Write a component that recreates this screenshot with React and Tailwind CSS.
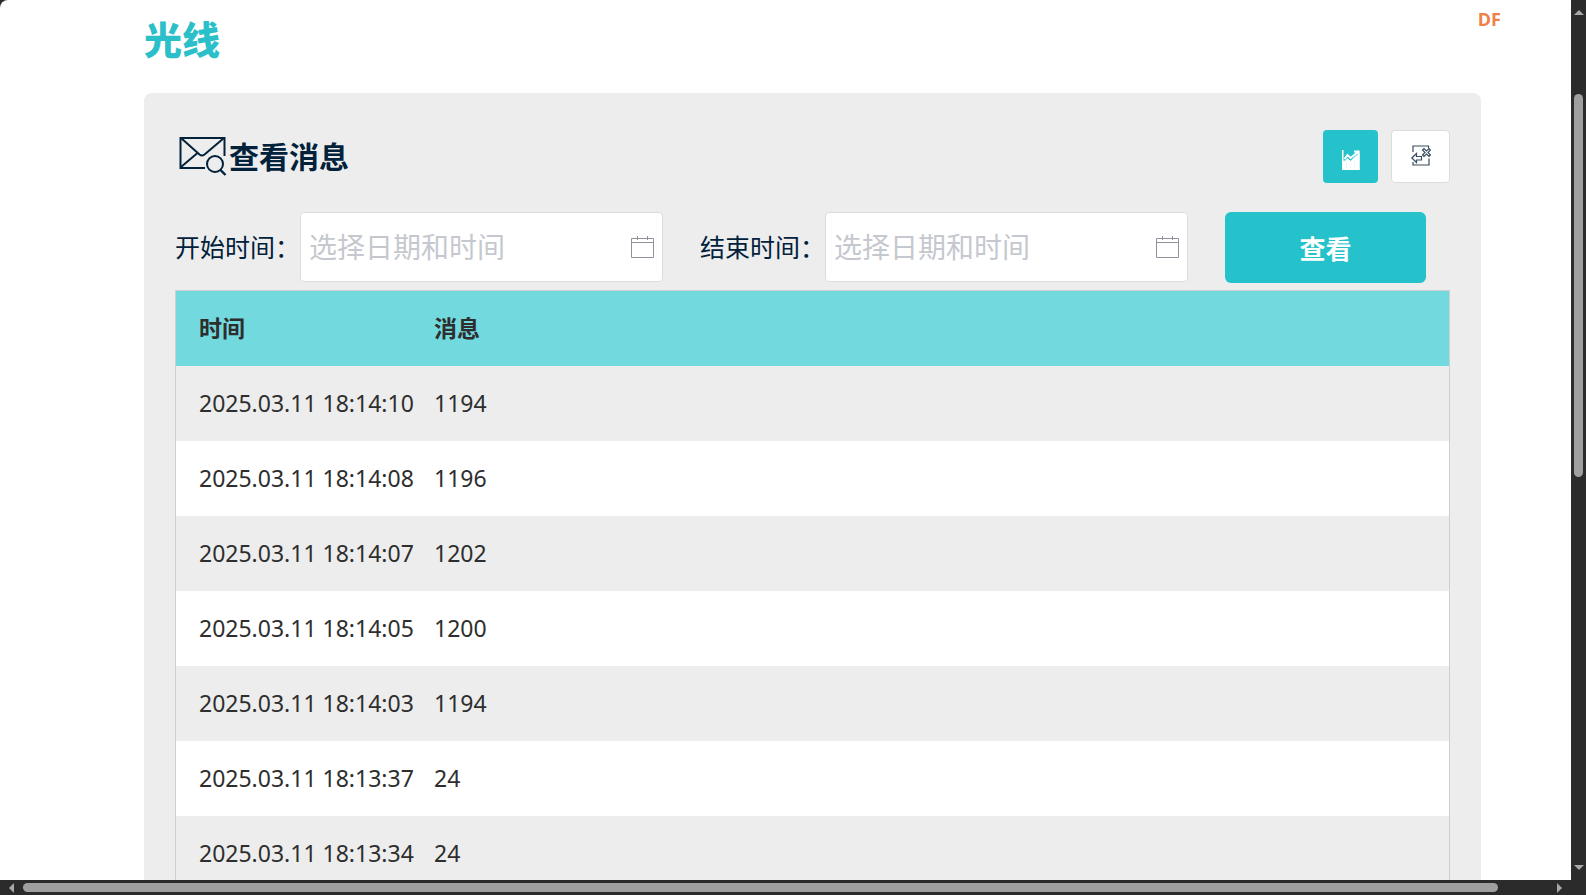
const rows = [
  ["2025.03.11 18:14:10", "1194"],
  ["2025.03.11 18:14:08", "1196"],
  ["2025.03.11 18:14:07", "1202"],
  ["2025.03.11 18:14:05", "1200"],
  ["2025.03.11 18:14:03", "1194"],
  ["2025.03.11 18:13:37", "24"],
  ["2025.03.11 18:13:34", "24"],
];

function MailSearchIcon() {
  return (
    <svg width="48" height="42" viewBox="0 0 48 42" fill="none" stroke="#02213b" strokeWidth="2" aria-hidden="true">
      <path d="M26 32H1.5V2H45.5V20" />
      <path d="M2 2L20.5 18.5Q23 20.5 25.5 18.5L45 2M2 31L18.5 17" />
      <circle cx="36" cy="28" r="8" />
      <path d="M41.5 34L46.5 39" strokeWidth="2.4" />
    </svg>
  );
}

function ChartIcon() {
  return (
    <svg width="18" height="20" viewBox="0 0 18 20" aria-hidden="true">
      <path fill="#fff" d="M0 0H1.500V11L5 8L8.500 10.500L13.500 5L17.800 4V20H0Z" />
      <path fill="none" stroke="#25c2cc" strokeWidth="0.800" d="M2.500 11L5.500 7.500L8.500 10.500L15.500 4" />
      <path fill="none" stroke="#fff" strokeWidth="2" d="M2.500 9L5.500 5L8.500 8L16 2M12 1.500H16.700V5" />
      <path stroke="#25c2cc" strokeOpacity="0.200" strokeWidth="0.500" d="M4.500 13V18M8.500 14V18M12.500 11V18" />
    </svg>
  );
}

function ExitIcon() {
  return (
    <svg width="20" height="21" viewBox="0 0 20 21" fill="none" stroke="#3a4c5f" strokeWidth="1.200" aria-hidden="true">
      <path d="M2 7V1H17.500V3M18 13.500V20H2V17" />
      <path d="M0.800 13L5.500 8.500V11.500H10.500V15H5.500V17.500Z" />
      <path d="M11.500 5L13 3.500L15.500 6L18 3.500L19.400 5L17 7.500L19.400 10L18 11.500L15.500 9L13 11.500L11.500 10L14 7.500Z" />
    </svg>
  );
}

function CalendarIcon() {
  return (
    <svg width="23" height="24" viewBox="0 0 23 24" fill="none" stroke="#8f929b" aria-hidden="true">
      <path d="M0.500 3.500H22.500V22.500H0.500ZM0.500 7.500H22.500M6.500 1V5M16.500 1V5" />
    </svg>
  );
}

function DateField({ id, label }) {
  return (
    <div className="flex items-center">
      <label htmlFor={id} className="w-[125px] pt-0.5 text-[25px] whitespace-nowrap text-[#02213b]">{label}</label>
      <div className="flex h-[70px] w-[363px] items-center rounded border border-[#dcdcdc] bg-white pr-2 pl-2">
        <input
          id={id}
          type="text"
          placeholder="选择日期和时间"
          className="min-w-0 flex-1 bg-transparent text-[28px] outline-none placeholder:text-[#c5c8ce]"
        />
        <CalendarIcon />
      </div>
    </div>
  );
}

function Arrow({ points }) {
  return (
    <svg width="10" height="10" viewBox="0 0 10 10" fill="#a8a8a8" className="shrink-0" aria-hidden="true">
      <polygon points={points} />
    </svg>
  );
}

export default function App() {
  return (
    <div className="grid h-screen grid-cols-[minmax(0,1fr)_15px] grid-rows-[minmax(0,1fr)_15px] overflow-hidden bg-[#2b2b2b] font-['Noto_Sans','Noto_Sans_CJK_SC',sans-serif]">
      <main className="overflow-hidden rounded-tl-lg bg-white pr-[90px] pl-36">
        <header className="flex h-[93px] items-start justify-between">
          <h1 className="pt-3 text-[38px] leading-[54px] font-black text-[#2bc0c9]">光线</h1>
          <a href="#df" className="mr-[-20px] pt-[7px] font-['Open_Sans',sans-serif] text-[18px] leading-6 font-bold text-[#f08045]">DF</a>
        </header>
        <section className="rounded-lg bg-[#ededed] px-[31px] pt-[37px]">
          <div className="flex items-center justify-between">
            <h2 className="flex h-[53px] items-center gap-0.5 pl-1 text-[30px] font-bold text-[#02213b]">
              <MailSearchIcon />
              <span>查看消息</span>
            </h2>
            <div className="flex gap-[13px]">
              <button type="button" aria-label="图表" className="flex h-[53px] w-[55px] items-center justify-center rounded bg-[#25c2cc] pt-1.5">
                <ChartIcon />
              </button>
              <button type="button" aria-label="退出" className="flex h-[53px] w-[59px] items-center justify-center rounded border border-[#dcdcdc] bg-white pb-0.5">
                <ExitIcon />
              </button>
            </div>
          </div>
          <form className="mt-[29px] flex items-start">
            <div className="flex gap-[37px]">
              <DateField id="start" label="开始时间：" />
              <DateField id="end" label="结束时间：" />
            </div>
            <button type="button" className="ml-[37px] h-[71px] w-[201px] rounded-md bg-[#25c2cc] pt-1 text-[26px] font-bold text-white">查看</button>
          </form>
          <table className="mt-[7px] w-full table-fixed border-separate border-spacing-0 border border-b-0 border-[#cfcfcf] text-left text-[23px] text-[#2e2e2e]">
            <thead>
              <tr className="h-[75px] bg-[#72d9de]">
                <th className="w-[258px] pl-[23px] font-bold">时间</th>
                <th className="font-bold">消息</th>
              </tr>
            </thead>
            <tbody>
              {rows.map(([time, message]) => (
                <tr key={time} className="h-[75px] odd:bg-[#ededed] even:bg-white">
                  <td className="pl-[23px] whitespace-nowrap">{time}</td>
                  <td>{message}</td>
                </tr>
              ))}
            </tbody>
          </table>
        </section>
      </main>
      <div className="flex flex-col items-center justify-between pt-2 pb-2">
        <Arrow points="0,7 5,2 10,7" />
        <div className="mt-[76px] mb-auto h-[44.3%] w-[9px] rounded-full bg-[#9f9f9f]" />
        <Arrow points="0,3 5,8 10,3" />
      </div>
      <div className="flex items-center pr-[7px] pl-2">
        <Arrow points="6,0 1,5 6,10" />
        <div className="mr-auto ml-[5px] h-[9px] w-[94.8%] rounded-full bg-[#9f9f9f]" />
        <Arrow points="3,0 8,5 3,10" />
      </div>
      <div />
    </div>
  );
}
